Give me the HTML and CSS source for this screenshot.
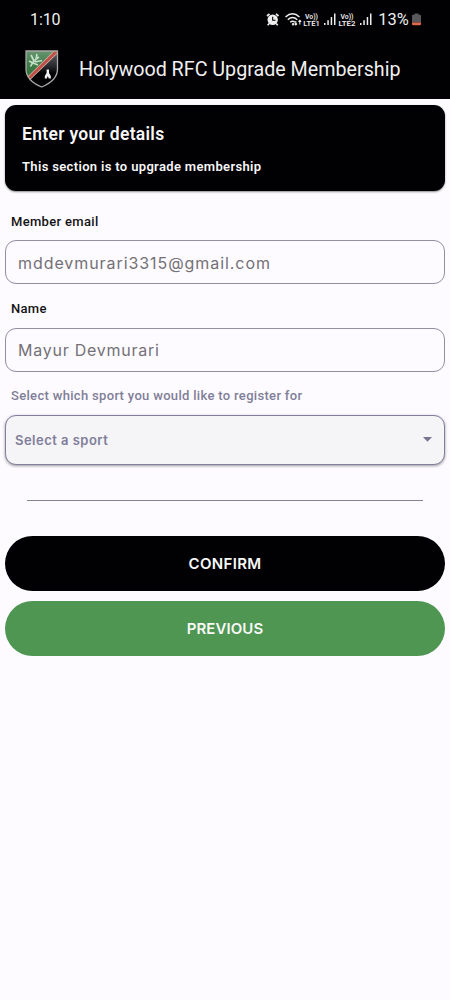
FILE: index.html
```html
<!DOCTYPE html>
<html lang="en">
<head>
<meta charset="utf-8">
<title>Holywood RFC Upgrade Membership</title>
<link rel="stylesheet" href="styles.css">
</head>
<body>
<header class="top">
  <div class="status">
    <span class="clock">1:10</span>
    <svg class="status-icons" width="168" height="20" viewBox="0 0 168 20">
      <g fill="#eee">
        <circle cx="7.700" cy="9.800" r="5.200"/>
        <path d="M2 6L4.500 3.800M13.500 6L11 3.800M4.200 13.500L2.700 15.300M11.200 13.500L12.700 15.300" stroke="#eee" stroke-width="1.700"/>
        <path d="M7.700 6.800V10.200H10.500" stroke="#000" stroke-width="1.100" fill="none"/>
      </g>
      <g fill="none" stroke="#eee" stroke-width="1.400">
        <path d="M20.500 7Q27.500 .5 34.500 7M22.800 9.700Q27.500 5.300 32.300 9.700M25.200 12.300Q27.500 10 30 12.300"/>
        <path d="M30.800 11V15M29.500 13.700L30.800 15L32.100 13.700M34.800 14.500V10.300M33.400 11.700L34.800 10.300L36.200 11.700" stroke-width="1.100"/>
        <circle cx="28" cy="14.300" r=".5"/>
      </g>
      <g class="lte">
        <text x="46.500" y="8.500" text-anchor="middle" textLength="13" lengthAdjust="spacingAndGlyphs">Vo))</text>
        <text x="46.500" y="16" text-anchor="middle" textLength="16.500" lengthAdjust="spacingAndGlyphs">LTE1</text>
        <text x="82" y="8.500" text-anchor="middle" textLength="13" lengthAdjust="spacingAndGlyphs">Vo))</text>
        <text x="82" y="16" text-anchor="middle" textLength="17" lengthAdjust="spacingAndGlyphs">LTE2</text>
      </g>
      <path fill="#eee" d="M59 13h1.500v2h-1.500zM62.300 10.300h1.500v4.700h-1.500zM65.700 7h1.500v8h-1.500zM69 3.500h1.500V15h-1.500zM95 13h1.500v2H95zM98.300 10.300h1.500v4.700h-1.500zM101.700 7h1.500v8h-1.500zM105 3.500h1.500V15h-1.500z"/>
      <text class="percent" x="113.200" y="15" textLength="30.500" lengthAdjust="spacingAndGlyphs">13%</text>
      <path fill="#59595b" d="M149.500 3.500h4v1.300h1.500q1 0 1 1v6.700h-9V5.800q0-1 1-1h1.500z"/>
      <path fill="#e06a4c" d="M147 12.500h9V14q0 1.200-1.200 1.200h-6.600q-1.200 0-1.200-1.200z"/>
    </svg>
  </div>
  <div class="app-bar">
    <svg class="crest" width="34" height="40" viewBox="0 0 34 40">
      <defs>
        <clipPath id="shield"><path d="M1 2H32.500V20C32.500 29 25 34.500 16.750 38C8 34.500 1 29 1 20Z"/></clipPath>
        <linearGradient id="field" x2="0" y2="1"><stop stop-color="#6b9874"/><stop offset=".5" stop-color="#427c4c"/><stop offset="1" stop-color="#276c31"/></linearGradient>
        <linearGradient id="night" x2="0" y2="1"><stop stop-color="#6b6b70"/><stop offset=".45" stop-color="#25262b"/><stop offset=".6" stop-color="#030305"/></linearGradient>
      </defs>
      <g clip-path="url(#shield)">
        <rect width="34" height="40" fill="url(#night)"/>
        <path d="M0 0H34L2 31H0Z" fill="url(#field)"/>
        <path d="M35-1L1 32" stroke="#d9b5a8" stroke-width="4.400"/>
        <path d="M35-1L1 32" stroke="#bd5148" stroke-width="3"/>
        <path d="M5.500 17.500Q8 12 14 8M9 12L6 6M11 10.500L12 5M10 13L17 11.500M8 14L13 16M8 14L4 12" stroke="#c4dfc6" stroke-width="1.700" fill="none"/>
        <path d="M21.600 20.500h2.400v3.500l1.800 3v2.500h-2l-1-2.500-1 2.500h-2V27l1.800-3z" fill="#f2f2f5"/>
      </g>
      <path d="M1 2H32.500V20C32.500 29 25 34.500 16.750 38C8 34.500 1 29 1 20Z" fill="none" stroke="#aaa9a7" stroke-width="1.300"/>
    </svg>
    <h1 class="app-title">Holywood RFC Upgrade Membership</h1>
  </div>
</header>
<main class="form">
  <section class="intro">
    <h2 class="intro-title">Enter your details</h2>
    <p class="intro-text">This section is to upgrade membership</p>
  </section>
  <div class="label label-email">Member email</div>
  <div class="field"><span class="email">mddevmurari3315@gmail.com</span></div>
  <div class="label label-name">Name</div>
  <div class="field field-name"><span class="name">Mayur Devmurari</span></div>
  <div class="label label-sport">Select which sport you would like to register for</div>
  <div class="select">
    <span>Select a sport</span>
    <svg width="9" height="5" viewBox="0 0 9 5"><path d="M0 0H9L4.500 4.700Z" fill="#77758f"/></svg>
  </div>
  <div class="divider"></div>
  <button class="button confirm">CONFIRM</button>
  <button class="button previous">PREVIOUS</button>
</main>
</body>
</html>
```
FILE: styles.css
```css
* { box-sizing: border-box; }
body {
  margin: 0;
  min-height: 1000px;
  background: #fdfbff;
  font-family: Roboto, "Liberation Sans", sans-serif;
}
.top { height: 99px; background: #010002; color: #f0eff1; }
.status {
  display: flex;
  justify-content: space-between;
  align-items: center;
  height: 39px;
  padding: 0 17px 0 30px;
}
.clock { font-size: 16px; letter-spacing: -0.1px; }
.lte text { fill: #eee; font-size: 7.500px; font-weight: 600; }
.percent { fill: #eee; font-size: 16px; }
.app-bar { display: flex; align-items: center; height: 60px; padding-left: 25px; }
.crest { flex: none; }
.app-title { margin: 0 0 0 20px; padding-top: 2px; font-size: 19.700px; font-weight: 400; line-height: 24px; white-space: nowrap; }
.form { display: flex; flex-direction: column; padding: 6px 5px 0; }
.intro {
  height: 86px;
  padding: 18px 17px 0;
  border-radius: 11px;
  background: #010002;
  color: #f7f6f8;
  box-shadow: 0 1px 2px rgba(0, 0, 0, .45);
}
.intro-title { margin: 0; font-size: 17.500px; font-weight: 600; line-height: 22px; letter-spacing: .3px; }
.intro-text { margin: 13px 0 0; font-size: 13px; font-weight: 600; line-height: 17px; letter-spacing: .34px; }
.label { padding-left: 6px; font-size: 13px; font-weight: 500; line-height: 16px; letter-spacing: .32px; color: #141316; white-space: nowrap; }
.label-email { margin: 23px 0 10px; }
.label-name { margin: 17px 0 11px; }
.label-sport { margin: 16px 0 11px; color: #807e98; }
.field {
  display: flex;
  align-items: center;
  height: 44px;
  padding: 1px 12px 0;
  border: 1px solid #918fa2;
  border-radius: 11px;
  font-family: Inter, sans-serif;
  font-size: 16px;
  color: #737176;
}
.field-name { padding: 0 12px 1px; }
.email { letter-spacing: .93px; }
.name { letter-spacing: .75px; }
.select {
  display: flex;
  align-items: center;
  justify-content: space-between;
  height: 50px;
  padding: 0 12px 1px 9px;
  border: 1px solid #817f9c;
  border-radius: 11px;
  background: #f5f4f6;
  box-shadow: 0 1px 3px rgba(0, 0, 0, .4);
  font-family: Inter, sans-serif;
  font-size: 13px;
  font-weight: 600;
  letter-spacing: .48px;
  color: #807e9b;
}
.divider { height: 1px; margin: 35px 22px; background: #85838f; }
.button {
  height: 55px;
  padding: 0;
  border: 0;
  border-radius: 28px;
  font-family: Inter, sans-serif;
  font-size: 15px;
  font-weight: 600;
  color: #f8f8f8;
}
.confirm { background: #010002; letter-spacing: .35px; }
.previous { margin-top: 10px; background: #4e9652; letter-spacing: .1px; }
```
